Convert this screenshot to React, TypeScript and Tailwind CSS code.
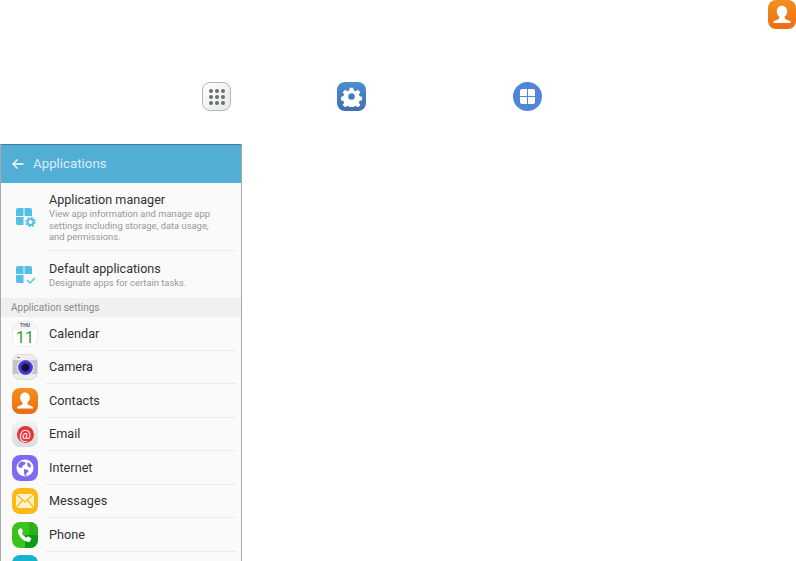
const font = { fontFamily: 'Roboto, sans-serif' };

function PersonGlyph({ size }: { size: number }) {
  return (
    <svg width={size} height={size} viewBox="0 0 24 24">
      <path
        fill="#fff"
        d="M12 3.500c-3 0-4.800 2.300-4.800 5.200 0 2 .9 3.700 2.300 4.700v1.200c0 .8-.5 1.200-1.300 1.500l-3.300 1.300c-.6.3-.9.8-.9 1.400v.700h16v-.7c0-.6-.3-1.100-.9-1.400l-3.300-1.300c-.8-.3-1.300-.7-1.300-1.500v-1.200c1.400-1 2.300-2.700 2.300-4.700 0-2.900-1.800-5.200-4.800-5.200z"
      />
    </svg>
  );
}

function ContactsIcon({ box, glyph }: { box: string; glyph: number }) {
  return (
    <div className={`flex shrink-0 items-center justify-center rounded-[8px] bg-gradient-to-b from-[#f4901f] to-[#ea6c12] ${box}`}>
      <PersonGlyph size={glyph} />
    </div>
  );
}

function AppsDots() {
  return (
    <div className="flex h-[29px] w-[29px] items-center justify-center rounded-[8px] border border-[#b5b5b5] bg-gradient-to-br from-white to-[#e6e6e6]">
      <div className="grid grid-cols-3 gap-[2px]">
        {Array.from({ length: 9 }).map((_, i) => (
          <div key={i} className="h-[4px] w-[4px] rounded-full bg-[#66706c]" />
        ))}
      </div>
    </div>
  );
}

function SettingsIcon() {
  return (
    <div className="flex h-[29px] w-[29px] items-center justify-center rounded-[8px] bg-gradient-to-b from-[#4b8fd0] to-[#3f6fb0]">
      <svg width="21" height="21" viewBox="0 0 24 24">
        <path
          fill="#fff"
          fillRule="evenodd"
          d="M10 2h4l.6 3 2.100.9 2.600-1.700 2.800 2.800-1.700 2.600.9 2.100 3 .6v4l-3 .6-.9 2.100 1.700 2.600-2.800 2.800-2.600-1.700-2.100.9-.6 3h-4l-.6-3-2.100-.9-2.600 1.700-2.800-2.800 1.700-2.600-.9-2.100-3-.6v-4l3-.6.9-2.100-1.700-2.600 2.800-2.800 2.600 1.700 2.100-.9zM12 8.300a3.700 3.700 0 1 0 0 7.400 3.700 3.700 0 0 0 0-7.400z"
        />
      </svg>
    </div>
  );
}

function AppsCircle() {
  return (
    <div className="flex h-[29px] w-[29px] items-center justify-center rounded-full bg-[#4f86dc]">
      <div className="grid grid-cols-2 gap-[1px]">
        <div className="h-[7px] w-[7px] rounded-tl-[2px] bg-white" />
        <div className="h-[7px] w-[7px] rounded-tr-[2px] bg-white" />
        <div className="h-[7px] w-[7px] rounded-bl-[2px] bg-white" />
        <div className="h-[7px] w-[7px] rounded-br-[2px] bg-white" />
      </div>
    </div>
  );
}

function TilesGlyph({ kind }: { kind: 'gear' | 'check' }) {
  return (
    <svg width="22" height="22" viewBox="0 0 22 22">
      <g fill="#54bfe9">
        <path d="M1 3a2 2 0 0 1 2-2h5.500v8H1z" />
        <path d="M9.500 1H15a2 2 0 0 1 2 2v6H9.500z" />
        <path d="M1 10h7.500v8H3a2 2 0 0 1-2-2z" />
      </g>
      {kind === 'gear' ? (
        <g fill="none" stroke="#54bfe9">
          <circle cx="15.500" cy="15" r="3" strokeWidth="2" />
          <circle cx="15.500" cy="15" r="4.500" strokeWidth="1.500" strokeDasharray="1.800 1.730" />
        </g>
      ) : (
        <path d="M12 15l3 3 5-5" fill="none" stroke="#54bfe9" strokeWidth="1.400" />
      )}
    </svg>
  );
}

function CalendarIcon() {
  return (
    <div className="flex h-[26px] w-[26px] flex-col items-center overflow-hidden rounded-[8px] border border-[#ececec] bg-white">
      <div className="flex h-[9px] w-full items-center justify-center bg-[#f4f4f4] text-[5px] font-bold leading-none text-[#555]">
        THU
      </div>
      <div className="text-[16px] leading-[16px] text-[#2f9e2f]">11</div>
    </div>
  );
}

function CameraIcon() {
  return (
    <div className="relative flex h-[26px] w-[26px] items-center justify-center overflow-hidden rounded-[8px] border border-[#dedede] bg-[#ededed]">
      <div className="absolute inset-x-0 top-[5px] h-[14px] bg-[#c4c4c8]" />
      <div className="absolute left-[4px] top-[2px] h-[1px] w-[3px] bg-[#e8603c]" />
      <div className="relative flex h-[17px] w-[17px] items-center justify-center rounded-full bg-[#f4f4f4]">
        <div className="h-[15px] w-[15px] rounded-full bg-[radial-gradient(circle,#14102c_26%,#4a2fd8_48%,#3f8be8_100%)]" />
      </div>
    </div>
  );
}

function EmailIcon() {
  return (
    <div className="flex h-[26px] w-[26px] items-center justify-center rounded-[8px] bg-gradient-to-b from-[#f2f2f2] to-[#dcdcdc]">
      <div className="flex h-[17px] w-[17px] items-center justify-center rounded-full bg-[#e4343c] text-[13px] leading-none text-white">
        @
      </div>
    </div>
  );
}

function InternetIcon() {
  return (
    <div className="flex h-[26px] w-[26px] items-center justify-center rounded-[8px] bg-[#7f6bf2]">
      <svg width="20" height="20" viewBox="0 0 20 20">
        <circle cx="10" cy="10" r="8.500" fill="#fff" />
        <path
          fill="#7f6bf2"
          d="M6 3.500l4 .5.500 2-2.500 1.500-1 2.500-2.500-.5-1.500-1.500C3.500 6 4.500 4.500 6 3.500zM9 11l4 1 .5 2-2 1-.5 3-1 .2-1-3.200zM13 4l2.500 2.500.5 3-2.500-.5-1.500-2.500z"
        />
      </svg>
    </div>
  );
}

function MessagesIcon() {
  return (
    <div className="flex h-[26px] w-[26px] items-center justify-center rounded-[8px] bg-[#fdb913]">
      <svg width="20" height="16" viewBox="0 0 20 16">
        <path d="M1 1h18v14H1z" fill="#fff3cf" />
        <path d="M1 1l9 8 9-8M1 15l6.500-8M19 15l-6.500-8" fill="none" stroke="#fdb913" strokeWidth="1.200" />
      </svg>
    </div>
  );
}

function PhoneIcon() {
  return (
    <div className="relative flex h-[26px] w-[26px] items-center justify-center overflow-hidden rounded-[8px] bg-[#3cc21c]">
      <div className="absolute bottom-0 right-0 h-[13px] w-[13px] bg-[#0a9c18]" />
      <div className="absolute right-0 top-0 h-[13px] w-[9px] bg-[#2cb01a]" />
      <svg className="relative" width="18" height="18" viewBox="0 0 24 24">
        <path
          fill="#fff"
          d="M6.600 2.500l3 4.500-1.800 2.300c1 2.700 3.200 5 6 6.300l2.200-1.800 4.500 3-1.600 3.500c-.5.800-1.300 1.200-2.200 1C9 20 3.600 14 2.500 7c-.1-1 .3-1.800 1-2.400z"
        />
      </svg>
    </div>
  );
}

function SettingRow({ icon, label }: { icon: React.ReactNode; label: string }) {
  return (
    <div className="flex h-[33.500px] shrink-0 items-center pl-[11px] pr-[5px]">
      <div className="w-[33px] shrink-0">{icon}</div>
      <div className="flex h-full flex-1 items-center border-b border-[#ececec] pl-[4px] text-[12.700px] text-[#333]">
        {label}
      </div>
    </div>
  );
}

const settings: { label: string; icon: React.ReactNode }[] = [
  { label: 'Calendar', icon: <CalendarIcon /> },
  { label: 'Camera', icon: <CameraIcon /> },
  { label: 'Contacts', icon: <ContactsIcon box="h-[26px] w-[26px]" glyph={24} /> },
  { label: 'Email', icon: <EmailIcon /> },
  { label: 'Internet', icon: <InternetIcon /> },
  { label: 'Messages', icon: <MessagesIcon /> },
  { label: 'Phone', icon: <PhoneIcon /> },
];

export default function App() {
  return (
    <div className="flex h-[561px] w-[796px] flex-col overflow-hidden bg-white" style={font}>
      <div className="flex justify-end">
        <ContactsIcon box="h-[29px] w-[28px]" glyph={26} />
      </div>

      <div className="mt-[53px] flex pl-[202px]">
        <AppsDots />
        <div className="ml-[106px]">
          <SettingsIcon />
        </div>
        <div className="ml-[147px]">
          <AppsCircle />
        </div>
      </div>

      <div className="mt-[33px] flex w-[242px] flex-1 flex-col overflow-hidden border-x border-x-[#a8a8a8] bg-[#fafafa]">
        <div className="flex h-[39px] shrink-0 items-center border-t border-t-[#3f7f9c] bg-[#52aed5] pl-[10px] text-[13.300px] text-[#d9eef7]">
          <svg width="14" height="14" viewBox="0 0 14 14" fill="none" stroke="#fff" strokeWidth="1.300">
            <path d="M12.500 7H2M6.500 2.500L2 7l4.500 4.500" />
          </svg>
          <span className="ml-[8px]">Applications</span>
        </div>

        <div className="flex h-[68px] shrink-0 pl-[14px] pr-[5px]">
          <div className="w-[30px] shrink-0 pt-[24px]">
            <TilesGlyph kind="gear" />
          </div>
          <div className="flex-1 border-b border-[#ececec] pl-[4px] pt-[8px]">
            <div className="text-[12.600px] leading-[17px] text-[#333]">Application manager</div>
            <div className="text-[9.400px] leading-[11.500px] text-[#989898]">
              View app information and manage app
              <br />
              settings including storage, data usage,
              <br />
              and permissions.
            </div>
          </div>
        </div>

        <div className="flex h-[47px] shrink-0 pl-[14px] pr-[5px]">
          <div className="w-[30px] shrink-0 pt-[14px]">
            <TilesGlyph kind="check" />
          </div>
          <div className="flex-1 pl-[4px] pt-[9px]">
            <div className="text-[12.600px] leading-[17px] text-[#333]">Default applications</div>
            <div className="text-[9.400px] leading-[11.500px] text-[#989898]">Designate apps for certain tasks.</div>
          </div>
        </div>

        <div className="flex h-[19px] shrink-0 items-center bg-[#f0f0f0] pl-[10px] text-[10px] text-[#8a8a8a]">
          Application settings
        </div>

        {settings.map((s) => (
          <SettingRow key={s.label} icon={s.icon} label={s.label} />
        ))}
        <div className="shrink-0 pl-[11px] pt-[3px]">
          <div className="h-[26px] w-[26px] rounded-[8px] bg-[#12b5cb]" />
        </div>
      </div>
    </div>
  );
}
